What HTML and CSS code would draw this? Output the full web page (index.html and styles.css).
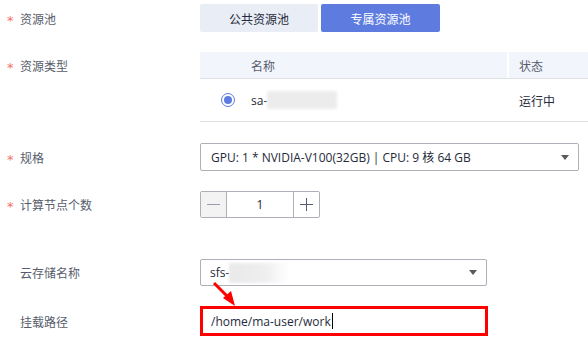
FILE: index.html
```html
<!DOCTYPE html>
<html lang="zh">
<head>
<meta charset="utf-8">
<link rel="stylesheet" href="styles.css">
</head>
<body>
<div class="form">
  <div class="row r-pool">
    <div class="label"><span class="star">*</span>资源池</div>
    <div class="toggle">
      <div class="tbtn">公共资源池</div>
      <div class="tbtn active">专属资源池</div>
    </div>
  </div>

  <div class="row r-type">
    <div class="label lt"><span class="star">*</span>资源类型</div>
    <div class="table">
      <div class="thead">
        <div class="c-radio"></div>
        <div class="c-name">名称</div>
        <div class="c-status">状态</div>
      </div>
      <div class="trow">
        <div class="c-radio"><span class="radio"></span></div>
        <div class="c-name">sa-<span class="blur blur-sa"></span></div>
        <div class="c-status">运行中</div>
      </div>
    </div>
  </div>

  <div class="row r-spec">
    <div class="label"><span class="star">*</span>规格</div>
    <div class="select wide">
      <span class="sel-text">GPU: 1 * NVIDIA-V100(32GB) | CPU: 9 核 64 GB</span>
      <span class="caret"></span>
    </div>
  </div>

  <div class="row r-count">
    <div class="label"><span class="star">*</span>计算节点个数</div>
    <div class="stepper">
      <div class="sbtn minus"><span class="hbar"></span></div>
      <div class="sval">1</div>
      <div class="sbtn plus"><span class="hbar"></span><span class="vbar"></span></div>
    </div>
  </div>

  <div class="row r-storage">
    <div class="label plain">云存储名称</div>
    <div class="select narrow">
      <span class="sel-text">sfs-<span class="blur blur-sfs"></span></span>
      <span class="caret"></span>
    </div>
  </div>

  <div class="row r-mount">
    <div class="label plain">挂载路径</div>
    <div class="mount">/home/ma-user/work<span class="cursor"></span></div>
  </div>

  <svg class="arrow" width="40" height="40" viewBox="0 0 40 40">
    <line x1="2" y1="2" x2="17" y2="17" stroke="#ff0000" stroke-width="3"/>
    <polygon points="23,25 11,17 19,10" fill="#ff0000"/>
  </svg>
</div>
</body>
</html>
```

FILE: styles.css
```css
* { box-sizing: border-box; }
html, body { margin: 0; padding: 0; background: #ffffff; }
body {
  font-family: "Open Sans", "Noto Sans CJK SC", sans-serif;
  font-size: 12px;
  color: #252b3a;
  width: 588px;
  height: 344px;
  overflow: hidden;
}
.form {
  position: relative;
  display: flex;
  flex-direction: column;
  padding-top: 4px;
}
.row { display: flex; align-items: center; }
.label {
  width: 200px;
  flex: none;
  padding-left: 8px;
  color: #575d6c;
  font-family: "Noto Sans CJK SC", sans-serif;
  font-size: 12px;
  display: flex;
  align-items: center;
}
.label.plain { padding-left: 20px; }
.star {
  color: #f66f6a;
  width: 12px;
  font-family: "DejaVu Sans", sans-serif;
  font-size: 13px;
  line-height: 1;
  position: relative;
  top: 2px;
  left: -1px;
}
.r-type { align-items: flex-start; margin-top: 20px; }
.lt { height: 27px; }

.toggle { display: flex; gap: 3px; }
.tbtn {
  height: 28px;
  width: 118px;
  border-radius: 2px;
  background: #e9edf6;
  color: #252b3a;
  display: flex;
  align-items: center;
  justify-content: center;
  font-family: "Noto Sans CJK SC", sans-serif;
}
.tbtn.active { background: #5e7ce0; color: #ffffff; width: 119px; }

.table { flex: 1; }
.thead, .trow { display: flex; align-items: center; }
.thead {
  height: 27px;
  background: #f2f5fc;
  border-bottom: 1px solid #dfe1e6;
  color: #575d6c;
  font-family: "Noto Sans CJK SC", sans-serif;
}
.trow {
  height: 43px;
  border-bottom: 1px solid #dfe1e6;
}
.c-radio { width: 51px; height: 100%; display: flex; align-items: center; justify-content: flex-start; padding-left: 21px; }
.c-name { width: 256px; height: 100%; display: flex; align-items: center; }
.c-status { flex: 1; height: 100%; display: flex; align-items: center; padding-left: 12px; font-family: "Noto Sans CJK SC", sans-serif; }
.thead .c-status { border-left: 2px solid #ffffff; padding-left: 10px; }
.radio {
  width: 14px; height: 14px; border-radius: 50%;
  border: 1px solid #5e7ce0;
  display: flex; align-items: center; justify-content: center;
}
.radio::after {
  content: ""; width: 8px; height: 8px; border-radius: 50%; background: #5e7ce0;
}
.blur {
  display: inline-block;
  background: #ececec;
  filter: blur(1.5px);
  vertical-align: middle;
}
.blur-sa { width: 70px; height: 18px; }
.blur-sfs { width: 60px; height: 20px; background: linear-gradient(90deg, #e9e9e9 0%, #eeeeee 60%, #ffffff 100%); }

.r-spec { margin-top: 21px; }
.select {
  height: 28px;
  border: 1px solid #adb0b8;
  border-radius: 2px;
  display: flex;
  align-items: center;
  padding-left: 10px;
  padding-right: 8px;
  justify-content: space-between;
}
.select.wide { width: 379px; }
.select.narrow { width: 287px; height: 27px; padding-left: 9px; }
.sel-text { font-size: 12px; white-space: nowrap; display: flex; align-items: center; }
.caret {
  width: 0; height: 0;
  border-left: 4.5px solid transparent;
  border-right: 4.5px solid transparent;
  border-top: 5px solid #5a5a5a;
  margin-right: 1px;
}

.r-count { margin-top: 20px; }
.stepper {
  display: flex;
  height: 27px;
  width: 120px;
  border: 1px solid #adb0b8;
  border-radius: 2px;
}
.sbtn { width: 26px; flex: none; position: relative; display: flex; align-items: center; justify-content: center; }
.sbtn.minus { background: #f3f3f3; border-right: 1px solid #adb0b8; }
.sbtn.plus { border-left: 1px solid #adb0b8; }
.hbar { width: 13px; height: 1px; background: #9a9ea8; position: absolute; }
.plus .hbar { background: #575d6c; }
.vbar { width: 1px; height: 13px; background: #575d6c; position: absolute; }
.sval { flex: 1; display: flex; align-items: center; justify-content: center; font-size: 12px; }

.r-storage { margin-top: 41px; }
.r-mount { margin-top: 20px; }
.mount {
  width: 288px;
  height: 30px;
  border: 3px solid #ff0000;
  padding-left: 8px;
  display: flex;
  align-items: center;
  font-size: 12px;
  color: #252b3a;
}
.cursor { width: 1px; height: 16px; background: #000; margin-left: 1px; }

.arrow { position: absolute; left: 212px; top: 281px; }
```
